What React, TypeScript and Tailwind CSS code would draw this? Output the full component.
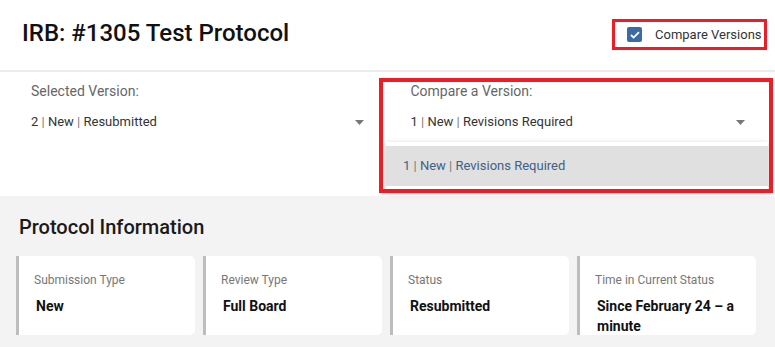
import React from "react";

const cards = [
  { label: "Submission Type", value: "New" },
  { label: "Review Type", value: "Full Board" },
  { label: "Status", value: "Resubmitted" },
  { label: "Time in Current Status", value: "Since February 24 – a minute" },
];

function Version({ parts }: { parts: string[] }) {
  return (
    <span>
      {parts.map((p, i) => (
        <React.Fragment key={p}>
          {i > 0 && <span className="text-[#7a7a7a]"> | </span>}
          {p}
        </React.Fragment>
      ))}
    </span>
  );
}

function Caret() {
  return (
    <svg width="9" height="5" viewBox="0 0 9 5" className="shrink-0">
      <path d="M0 0h9L4.5 5z" fill="#777" />
    </svg>
  );
}

export default function App() {
  return (
    <div className="relative w-[775px] h-[347px] overflow-hidden bg-[#f3f3f3] font-['Roboto','Liberation_Sans',sans-serif]">
      {/* header */}
      <div className="flex h-[70px] items-start justify-between bg-white pl-[22px] pr-[8px]">
        <h1 className="mt-[17px] text-[24px] leading-[32px] font-medium text-[#111]">
          IRB: #1305 Test Protocol
        </h1>
        <div className="relative mt-[19px] flex h-[31px] w-[155px] items-center pl-[15px]">
          <span className="flex h-[15px] w-[15px] items-center justify-center rounded-[2px] bg-[#3b6ba3]">
            <svg width="10" height="8" viewBox="0 0 10 8">
              <path d="M1 4l2.6 2.6L9 1.2" fill="none" stroke="#fff" strokeWidth="1.8" />
            </svg>
          </span>
          <span className="ml-[13px] text-[13px] text-[#333]">Compare Versions</span>
          <div className="absolute inset-0 border-[3px] border-[#ee1c25]" />
        </div>
      </div>
      <div className="h-[2px] bg-[#ececec]" />

      {/* version selects */}
      <div className="relative grid h-[124px] grid-cols-2 bg-white">
        <div className="pl-[31px] pr-[24px] pt-[9px]">
          <div className="text-[14px] leading-[20px] text-[#666]">Selected Version:</div>
          <div className="mt-[11px] flex h-[20px] items-center justify-between text-[13px] text-[#333]">
            <Version parts={["2", "New", "Resubmitted"]} />
            <Caret />
          </div>
        </div>
        <div className="pl-[23px] pr-[30px] pt-[9px]">
          <div className="text-[14px] leading-[20px] text-[#666]">Compare a Version:</div>
          <div className="mt-[11px] flex h-[20px] items-center justify-between text-[13px] text-[#333]">
            <Version parts={["1", "New", "Revisions Required"]} />
            <Caret />
          </div>
        </div>

        {/* open menu */}
        <div className="absolute left-[386px] top-[70px] w-[382px] bg-white py-[4px] shadow-[0_2px_6px_rgba(0,0,0,0.25)]">
          <div className="flex h-[40px] items-center bg-[#e0e0e0] pl-[17px] text-[13px] text-[#3f6188]">
            <Version parts={["1", "New", "Revisions Required"]} />
          </div>
        </div>
        <div className="absolute left-[379px] top-[6px] h-[115px] w-[394px] border-[4px] border-[#ee1c25]" />
      </div>

      {/* protocol info */}
      <div className="px-[16px] pt-[17px]">
        <h2 className="pl-[3px] text-[20px] leading-[28px] font-medium text-[#1a1a1a]">
          Protocol Information
        </h2>
        <div className="mt-[15px] flex gap-[8px]">
          {cards.map((c) => (
            <div
              key={c.label}
              className="h-[79px] w-[179px] overflow-hidden rounded-r-[5px] border-l-[3px] border-[#bdbdbd] bg-white pl-[15px] pr-[14px] pt-[16px]"
            >
              <div className="text-[12px] leading-[16px] text-[#777]">{c.label}</div>
              <div className="mt-[8px] ml-[2px] text-[14px] leading-[20px] font-bold text-[#111]">
                {c.value}
              </div>
            </div>
          ))}
        </div>
      </div>
    </div>
  );
}
